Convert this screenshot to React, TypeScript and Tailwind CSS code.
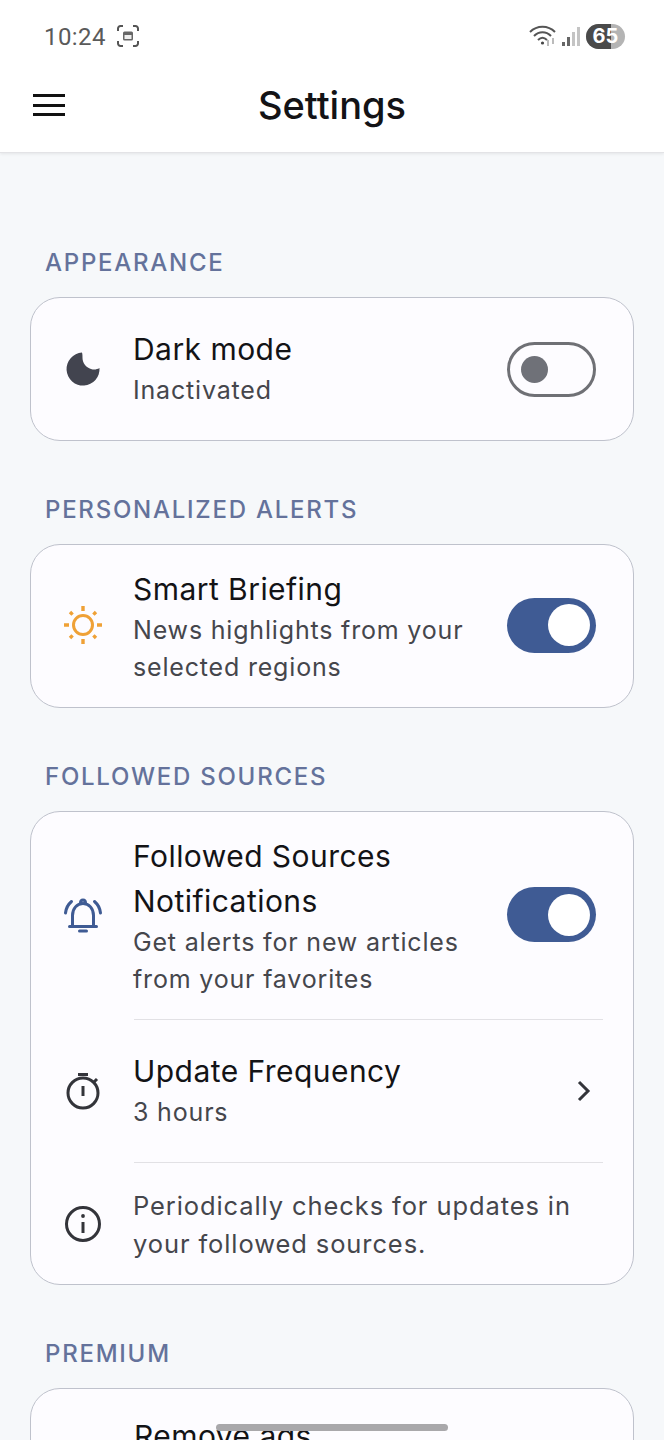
import React from "react";

const Toggle = ({ on }: { on: boolean }) => {
  if (on) {
    return (
      <div className="mb-[2px] flex h-[55px] w-[89px] shrink-0 items-center justify-end rounded-full bg-[#3f5b94] pr-1.5">
        <div className="h-[42px] w-[42px] rounded-full bg-white" />
      </div>
    );
  }
  return (
    <div className="flex h-[55px] w-[89px] shrink-0 items-center rounded-full border-[3px] border-[#6f7075] pl-[11px]">
      <div className="h-[27px] w-[27px] rounded-full bg-[#6f7178]" />
    </div>
  );
};

const MoonIcon = () => (
  <svg width="44" height="44" viewBox="0 0 44 44">
    <path
      d="M21 5.600A16.500 16.500 0 1 0 38.500 21C36 22.500 33 23 30 22C25 20.500 21.500 16 21.500 11C21.500 9 21.500 7 21 5.600Z"
      fill="#42444f"
    />
  </svg>
);

const SunIcon = () => (
  <svg width="44" height="44" viewBox="0 0 44 44" fill="none" stroke="#efa136" className="mb-[2px]">
    <circle cx="22" cy="22" r="9.500" strokeWidth="3" />
    <g strokeWidth="3.400">
      <path d="M22 3v5M22 36v5M3 22h5M36 22h5" />
      <path d="M9 9l2.600 2.600M32.400 32.400L35 35M9 35l2.600-2.600M32.400 11.600L35 9" />
    </g>
  </svg>
);

const BellIcon = () => (
  <svg width="44" height="44" viewBox="0 0 44 44" fill="none" stroke="#3f5b94" strokeWidth="3">
    <path d="M11.500 32V21.500C11.500 14.500 16 9.500 22 9.500S32.500 14.500 32.500 21.500V32" />
    <path d="M8.500 32.500H35.500" strokeLinecap="round" />
    <path d="M19.500 9C19.500 7 20.500 6 22 6S24.500 7 24.500 9" />
    <path d="M18.500 37H25.500" strokeLinecap="round" />
    <path d="M4.500 19C5 14 7 10.500 10.500 7.500M39.500 19C39 14 37 10.500 33.500 7.500" strokeLinecap="round" />
  </svg>
);

const TimerIcon = () => (
  <svg width="44" height="44" viewBox="0 0 44 44" fill="none" stroke="#33343a" strokeWidth="3">
    <circle cx="22" cy="24" r="15" />
    <path d="M17 5.500H27" />
    <path d="M22 17V27" />
    <path d="M33 13l3-3" />
  </svg>
);

const InfoIcon = () => (
  <svg width="44" height="44" viewBox="0 0 44 44" fill="none" stroke="#33343a" strokeWidth="3">
    <circle cx="22" cy="22" r="16.500" />
    <path d="M22 20V31" />
    <circle cx="22" cy="14" r="1.900" fill="#33343a" stroke="none" />
  </svg>
);

const StatusIcons = () => (
  <div className="flex items-center">
    <svg width="30" height="24" viewBox="0 0 30 24" fill="none" stroke="#555" strokeWidth="2">
      <path d="M1 8C8 1 19 1 26 8" />
      <path d="M5 12C10 7 17 7 22 12" />
      <path d="M9 16C12 13 15 13 18 16" />
      <circle cx="13.500" cy="19" r="1.600" fill="#444" stroke="none" />
      <path d="M19 16v6M24 20v-6" stroke="#bbb" />
    </svg>
    <svg width="20" height="24" viewBox="0 0 20 24" className="ml-[2px]">
      <rect x="1" y="18" width="3" height="4" fill="#666" />
      <rect x="6" y="13" width="3" height="9" fill="#666" />
      <rect x="11" y="8" width="3" height="14" fill="#c4c4c4" />
      <rect x="16" y="3" width="3" height="19" fill="#c4c4c4" />
    </svg>
    <div className="relative ml-[5px] flex h-[25px] w-[39px] items-center justify-center overflow-hidden rounded-full bg-[#b4b4b4]">
      <div className="absolute inset-y-0 left-0 w-[25px] bg-[#4a4a4a]" />
      <span className="relative text-[20px] font-bold text-white">65</span>
    </div>
  </div>
);

const Label = ({ text }: { text: string }) => (
  <div className="mb-[18px] h-8 pl-[45px] text-[24px] font-[450] leading-8 tracking-[1.75px] text-[#64729b]">{text}</div>
);

const Title = ({ children }: { children: React.ReactNode }) => (
  <div className="text-[30px] font-[430] leading-[45px] tracking-[0.45px] text-[#131316]">{children}</div>
);

const Sub = ({ children }: { children: React.ReactNode }) => (
  <div className="text-[25px] leading-[37px] tracking-[0.82px] text-[#45464c]">{children}</div>
);

const Card = ({ children }: { children: React.ReactNode }) => (
  <div className="mx-[30px] rounded-[30px] border border-[#bfc2cc] bg-[#fdfcff]">{children}</div>
);

const Divider = () => <div className="ml-[103px] mr-[30px] h-px bg-[#e2e1e5]" />;

export default function App() {
  return (
    <div className="relative h-[1440px] w-full overflow-hidden bg-[#f6f8fa] font-['Inter',sans-serif]">
      <div className="h-[153px] border-b border-[#e3e3e6] bg-white shadow-[0_1px_3px_rgba(0,0,0,0.08)]">
        <div className="flex h-[72px] items-center justify-between pl-[44px] pr-[39px]">
          <div className="flex items-center gap-[11px]">
            <span className="pt-px font-['Roboto',sans-serif] text-[24px] tracking-[0.4px] text-[#5a5a5a]">10:24</span>
            <svg width="22" height="22" viewBox="0 0 22 22" fill="none" stroke="#555" strokeWidth="2">
              <path d="M1 6V3.500A2.500 2.500 0 0 1 3.500 1H6M16 1h2.500A2.500 2.500 0 0 1 21 3.500V6M21 16v2.500a2.500 2.500 0 0 1-2.500 2.500H16M6 21H3.500A2.500 2.500 0 0 1 1 18.500V16" />
              <rect x="6" y="6.500" width="10" height="9" rx="1.500" fill="#666" stroke="none" />
              <rect x="7.500" y="10" width="7" height="4" fill="#eee" stroke="none" />
            </svg>
          </div>
          <StatusIcons />
        </div>
        <div className="relative flex h-[66px] items-center justify-center">
          <div className="absolute left-[33px] top-[22px] flex h-[22px] w-[32px] flex-col justify-between">
            <div className="h-[3px] bg-[#111]" />
            <div className="h-[3px] bg-[#111]" />
            <div className="h-[3px] bg-[#111]" />
          </div>
          <h1 className="text-[38px] font-medium text-[#131316]">Settings</h1>
        </div>
      </div>

      <main className="flex flex-col gap-[53px] pt-[94px]">
        <section>
          <Label text="APPEARANCE" />
          <Card>
            <div className="flex h-[142px] items-center pl-[30px] pr-[37px]">
              <div className="flex w-[44px] shrink-0 justify-center">
                <MoonIcon />
              </div>
              <div className="ml-[28px] flex-1 pb-[2px]">
                <Title>Dark mode</Title>
                <Sub>Inactivated</Sub>
              </div>
              <Toggle on={false} />
            </div>
          </Card>
        </section>

        <section>
          <Label text="PERSONALIZED ALERTS" />
          <Card>
            <div className="flex h-[162px] items-center pl-[30px] pr-[37px]">
              <div className="flex w-[44px] shrink-0 justify-center">
                <SunIcon />
              </div>
              <div className="ml-[28px] flex-1">
                <Title>Smart Briefing</Title>
                <Sub>
                  News highlights from your
                  <br />
                  selected regions
                </Sub>
              </div>
              <Toggle on={true} />
            </div>
          </Card>
        </section>

        <section>
          <Label text="FOLLOWED SOURCES" />
          <Card>
            <div className="flex h-[207px] items-center pl-[30px] pr-[37px]">
              <div className="flex w-[44px] shrink-0 justify-center">
                <BellIcon />
              </div>
              <div className="ml-[28px] flex-1">
                <Title>
                  Followed Sources
                  <br />
                  Notifications
                </Title>
                <Sub>
                  Get alerts for new articles
                  <br />
                  from your favorites
                </Sub>
              </div>
              <Toggle on={true} />
            </div>
            <Divider />
            <div className="flex h-[142px] items-center pl-[30px] pr-[37px]">
              <div className="flex w-[44px] shrink-0 justify-center">
                <TimerIcon />
              </div>
              <div className="ml-[28px] flex-1 pb-[2px]">
                <Title>Update Frequency</Title>
                <Sub>3 hours</Sub>
              </div>
              <svg width="20" height="24" viewBox="0 0 20 24" fill="none" stroke="#33343a" strokeWidth="3" className="mr-[2px]">
                <path d="M5 3L14 12L5 21" />
              </svg>
            </div>
            <Divider />
            <div className="flex h-[121px] items-center pl-[30px] pr-[37px]">
              <div className="flex w-[44px] shrink-0 justify-center">
                <InfoIcon />
              </div>
              <div className="ml-[28px] flex-1 pt-[2px] text-[25.5px] leading-[38px] tracking-[0.9px] text-[#45464c]">
                Periodically checks for updates in
                <br />
                your followed sources.
              </div>
            </div>
          </Card>
        </section>

        <section>
          <Label text="PREMIUM" />
          <Card>
            <div className="h-[142px] pl-[103px] pt-[25px]">
              <Title>Remove ads</Title>
            </div>
          </Card>
        </section>
      </main>

      <div className="absolute left-[216px] top-[1424px] h-[7px] w-[232px] rounded-full bg-[#a9a8ab]" />
    </div>
  );
}
